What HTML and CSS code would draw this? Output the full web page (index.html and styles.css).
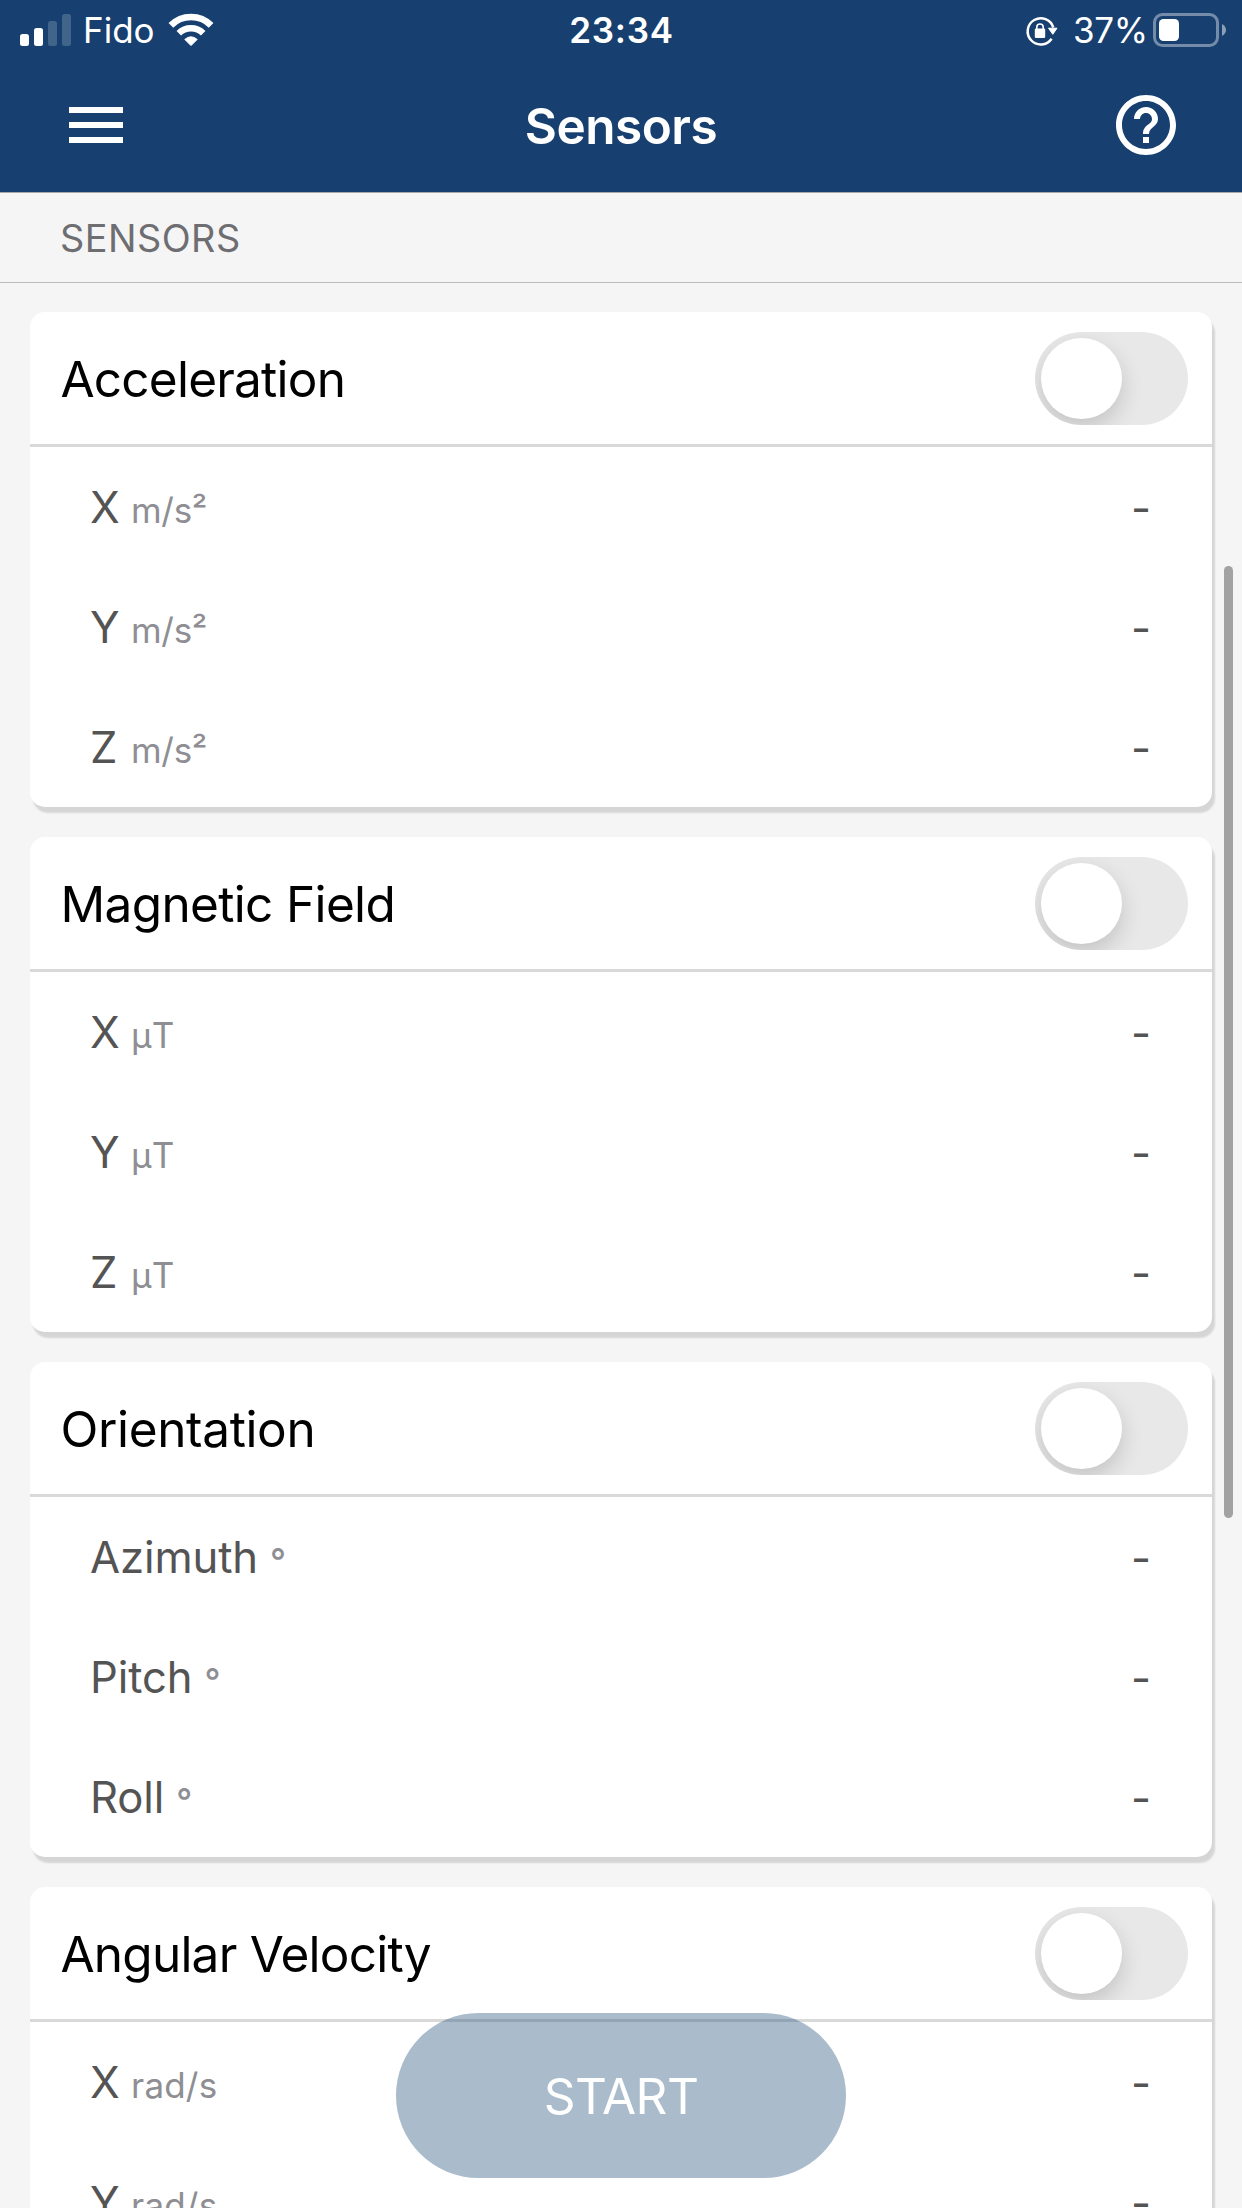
FILE: index.html
```
<!DOCTYPE html>
<html lang="en">
<head>
<meta charset="utf-8">
<title>Sensors</title>
<link rel="stylesheet" href="styles.css">
</head>
<body>
<div class="app">
  <header class="header">
    <div class="status">
      <div class="status-side">
        <svg class="signal" width="51" height="32" viewBox="0 0 51 32" fill="#fff">
          <rect x="0" y="20" width="9" height="12" rx="2.5"/>
          <rect x="14" y="14" width="9" height="18" rx="2.5"/>
          <rect x="28" y="7" width="9" height="25" rx="2.5" fill="#41658a"/>
          <rect x="42" y="0" width="9" height="32" rx="2.5" fill="#41658a"/>
        </svg>
        <span class="carrier">Fido</span>
        <svg class="wifi" width="46" height="34" viewBox="0 0 46 34">
          <g fill="none" stroke="#fff">
            <path d="M2.9 12.4A28.4 28.4 0 0 1 43.1 12.4" stroke-width="6.6"/>
            <path d="M10.8 20.3A17.3 17.3 0 0 1 35.2 20.3" stroke-width="6.4"/>
          </g>
          <path d="M23 32.6L16.8 26.4Q23 21.2 29.2 26.4Z" fill="#fff" stroke="#fff" stroke-width="1" stroke-linejoin="round"/>
        </svg>
      </div>
      <span class="clock">23:34</span>
      <div class="status-side status-right">
        <svg class="lock" width="34" height="32" viewBox="0 0 34 32">
          <path d="M28.3 12.5A13.1 13.1 0 1 0 26.6 23.7" fill="none" stroke="#fff" stroke-width="2.5"/>
          <path d="M23.5 13.2H32L27.8 19.3Z" fill="#fff" stroke="#fff" stroke-width="1" stroke-linejoin="round"/>
          <rect x="9.8" y="13.6" width="10.4" height="9.4" rx="1.2" fill="#fff"/>
          <path d="M11.8 14.2V12.2A3.2 3.2 0 0 1 18.2 12.2V14.2" fill="none" stroke="#fff" stroke-width="1.6"/>
        </svg>
        <span class="percent">37%</span>
        <svg class="battery" width="74" height="34" viewBox="0 0 74 34">
          <rect x="1.5" y="1.5" width="63" height="31" rx="8" fill="none" stroke="#748ca9" stroke-width="3"/>
          <rect x="6" y="6" width="20" height="22" rx="4.5" fill="#fff"/>
          <path d="M69 11Q73 13.500 73 17Q73 20.500 69 23Z" fill="#8ba0b7"/>
        </svg>
      </div>
    </div>
    <nav class="nav">
      <svg width="72" height="72" viewBox="0 0 24 24" fill="#fff"><path d="M3 18h18v-2H3v2zm0-5h18v-2H3v2zm0-7v2h18V6H3z"/></svg>
      <h1 class="nav-title">Sensors</h1>
      <svg width="72" height="72" viewBox="0 0 24 24" fill="#fff"><path d="M11 18h2v-2h-2v2zm1-16C6.480 2 2 6.480 2 12s4.480 10 10 10 10-4.480 10-10S17.520 2 12 2zm0 18c-4.410 0-8-3.590-8-8s3.590-8 8-8 8 3.590 8 8-3.590 8-8 8zm0-14c-2.210 0-4 1.790-4 4h2c0-1.100.9-2 2-2s2 .9 2 2c0 2-3 1.750-3 5h2c0-2.250 3-2.500 3-5 0-2.210-1.790-4-4-4z"/></svg>
    </nav>
  </header>
  <h2 class="section">SENSORS</h2>
  <main class="list">
    <section class="card">
      <div class="card-head"><h3 class="card-title tight">Acceleration</h3><span class="switch"><span class="knob"></span></span></div>
      <div class="row"><span class="axis">X</span><span class="unit squared">m/s²</span><span class="value">-</span></div>
      <div class="row"><span class="axis">Y</span><span class="unit squared">m/s²</span><span class="value">-</span></div>
      <div class="row"><span class="axis">Z</span><span class="unit squared">m/s²</span><span class="value">-</span></div>
    </section>
    <section class="card">
      <div class="card-head"><h3 class="card-title">Magnetic Field</h3><span class="switch"><span class="knob"></span></span></div>
      <div class="row"><span class="axis">X</span><span class="unit tesla">µT</span><span class="value">-</span></div>
      <div class="row"><span class="axis">Y</span><span class="unit tesla">µT</span><span class="value">-</span></div>
      <div class="row"><span class="axis">Z</span><span class="unit tesla">µT</span><span class="value">-</span></div>
    </section>
    <section class="card">
      <div class="card-head"><h3 class="card-title loose">Orientation</h3><span class="switch"><span class="knob"></span></span></div>
      <div class="row"><span class="label">Azimuth</span><span class="unit degree">°</span><span class="value">-</span></div>
      <div class="row"><span class="label">Pitch</span><span class="unit degree">°</span><span class="value">-</span></div>
      <div class="row"><span class="label">Roll</span><span class="unit degree">°</span><span class="value">-</span></div>
    </section>
    <section class="card">
      <div class="card-head"><h3 class="card-title tight">Angular Velocity</h3><span class="switch"><span class="knob"></span></span></div>
      <div class="row"><span class="axis">X</span><span class="unit rate">rad/s</span><span class="value">-</span></div>
      <div class="row"><span class="axis">Y</span><span class="unit rate">rad/s</span><span class="value">-</span></div>
      <div class="row"><span class="axis">Z</span><span class="unit rate">rad/s</span><span class="value">-</span></div>
    </section>
  </main>
  <div class="scrollbar"></div>
  <button class="start">START</button>
</div>
</body>
</html>
```
FILE: styles.css
```
* { box-sizing: border-box; }
html, body { margin: 0; height: 2208px; overflow: hidden; }
body { font-family: Inter, "Liberation Sans", sans-serif; background: #f5f5f5; color: #000; }
h1, h2, h3 { margin: 0; font-weight: 400; }
svg { display: block; flex: none; }
.app { position: relative; width: 1242px; height: 2208px; overflow: hidden; }

.header { height: 193px; background: #173f6f; color: #fff; border-bottom: 1px solid #a9a6a5; }
.status { display: grid; grid-template-columns: 1fr auto 1fr; align-items: center; height: 60px; padding: 0 17px 0 20px; font-size: 35px; line-height: 60px; }
.status-side { display: flex; align-items: center; }
.status-right { justify-content: flex-end; margin-right: -2px; }
.carrier { margin-left: 12px; width: 85px; }
.clock { font-weight: 600; font-size: 35px; letter-spacing: 0.7px; margin-left: -2px; }
.percent { width: 79px; margin-left: 14px; letter-spacing: -0.4px; }
.lock { margin: 2px 1px 0 -1px; }
.percent { text-indent: -1px; }

.nav { display: flex; align-items: center; justify-content: space-between; height: 132px; padding: 0 60px 2px; }
.nav-title { font-size: 49.5px; font-weight: 600; line-height: 60px; letter-spacing: -0.5px; padding-top: 1px; }

.section { height: 90px; padding: 1px 0 0 60px; border-bottom: 1px solid #bcbcbd; font-size: 37.8px; line-height: 89px; letter-spacing: 0.5px; color: #6d6d72; }

.list { display: flex; flex-direction: column; gap: 30px; padding: 29px 30px 0; }
.card { flex: none; background: #fff; border-radius: 15px; box-shadow: 3px 6px 2px rgba(0, 0, 0, 0.13); }
.card-head { display: flex; align-items: center; justify-content: space-between; height: 135px; padding: 0 24px 0 30.5px; border-bottom: 3px solid #d9d9d9; }
.card-title { font-size: 49.5px; line-height: 132px; letter-spacing: -0.65px; padding-top: 1px; }
.card-title.tight { letter-spacing: -0.78px; }
.card-title.loose { letter-spacing: -0.35px; }

.switch { width: 153px; height: 93px; padding: 6px; border-radius: 47px; background: #e8e8e8; overflow: hidden; }
.knob { display: block; width: 81px; height: 81px; border-radius: 50%; background: #fff; box-shadow: 0 9px 22px rgba(0, 0, 0, 0.16); }

.row { display: flex; align-items: baseline; height: 120px; padding: 1px 61px 0 60px; line-height: 120px; font-size: 43.6px; color: #545454; }
.axis { width: 41px; font-size: 43.6px; }
.label { margin-right: 12px; letter-spacing: -0.1px; }
.unit { font-size: 35px; color: #8e8e93; }
.squared { letter-spacing: -0.3px; }
.tesla { letter-spacing: 2px; }
.rate { letter-spacing: 0.2px; }
.degree { font-weight: 500; position: relative; top: 1px; }
.value { margin-left: auto; position: relative; top: 1px; }

.scrollbar { position: absolute; left: 1224px; top: 566px; width: 9px; height: 952px; border-radius: 5px; background: #a2a2a2; }
.start { position: absolute; left: 396px; top: 2013px; width: 450px; height: 165px; padding: 1px 0 0; border: 0; border-radius: 83px; background: rgba(43, 85, 127, 0.4); color: #fff; font: 49.5px/164px Inter, "Liberation Sans", sans-serif; letter-spacing: -0.6px; text-align: center; }
```
